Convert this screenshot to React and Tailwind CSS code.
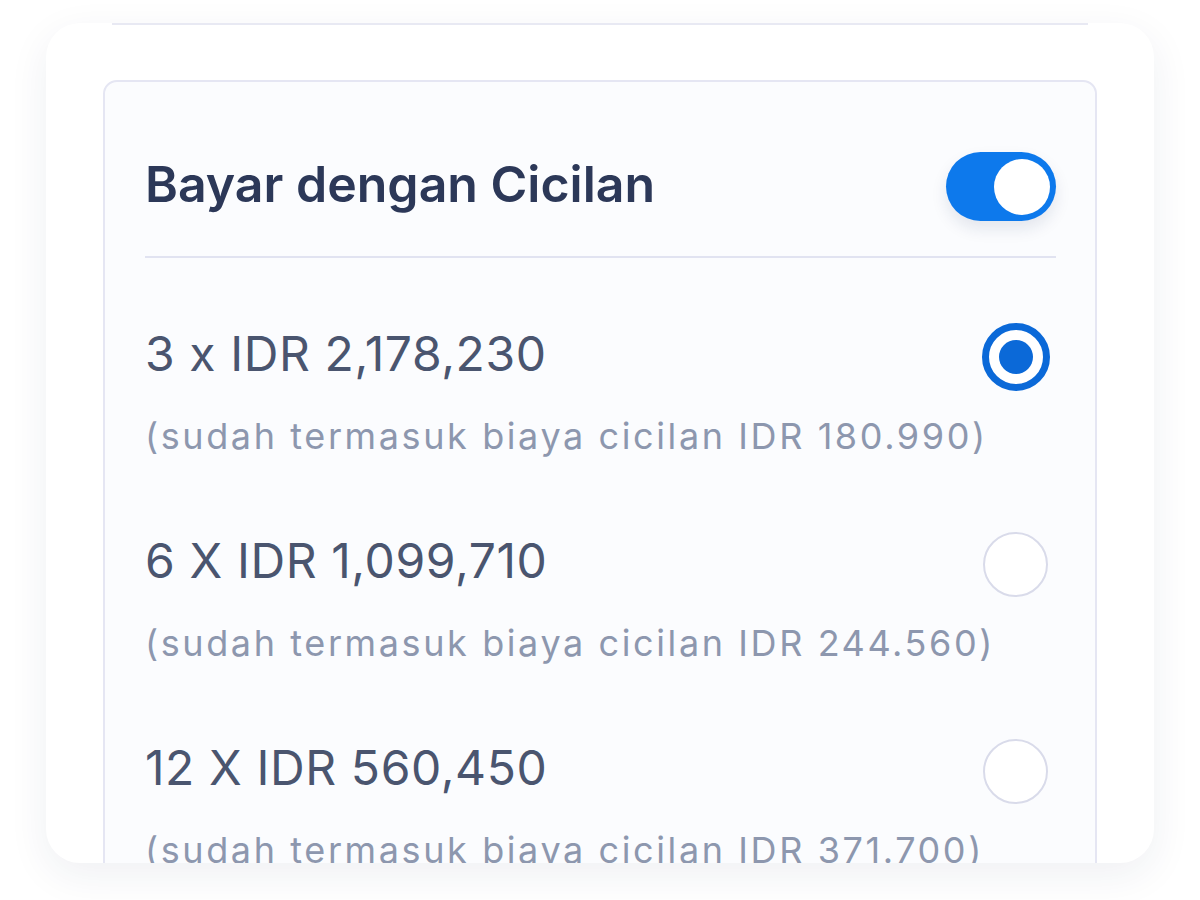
import React from "react";

const options = [
  { main: "3 x IDR 2,178,230", sub: "(sudah termasuk biaya cicilan IDR 180.990)", selected: true },
  { main: "6 X IDR 1,099,710", sub: "(sudah termasuk biaya cicilan IDR 244.560)", selected: false },
  { main: "12 X IDR 560,450", sub: "(sudah termasuk biaya cicilan IDR 371.700)", selected: false },
];

function Radio({ selected }) {
  if (selected) {
    return (
      <div className="w-[68px] h-[68px] rounded-full border-[7px] border-[#0b69d8] bg-white flex items-center justify-center">
        <div className="w-[34px] h-[34px] rounded-full bg-[#0b69d8]" />
      </div>
    );
  }
  return <div className="w-[65px] h-[65px] mr-[2px] rounded-full border-2 border-[#d9dbea] bg-white" />;
}

export default function App() {
  return (
    <div
      className="w-[1200px] h-[900px] bg-white pt-[23px] pl-[46px]"
      style={{ fontFamily: "Inter, 'Noto Sans', sans-serif" }}
    >
      <div className="w-[1108px] h-[840px] rounded-[34px] bg-white overflow-hidden shadow-[0_12px_40px_rgba(30,40,80,0.07)]">
        <div className="mx-[66px] h-[2px] bg-[#e8e9f3]" />
        <div className="mt-[55px] ml-[57px] w-[994px] rounded-[14px] border-2 border-[#e5e6f3] bg-[#fbfcfe] pl-[40px] pr-[39px] pt-[70px] pb-[60px]">
          <div className="flex items-center justify-between h-[69px]">
            <span className="text-[50px] font-semibold text-[#2c3858] leading-none mb-[6px]">
              Bayar dengan Cicilan
            </span>
            <div className="w-[110px] h-[69px] rounded-full bg-[#0d79ec] flex items-center justify-end pr-[6px] shadow-[0_8px_16px_rgba(20,40,90,0.10)]">
              <div className="w-[56px] h-[56px] rounded-full bg-white" />
            </div>
          </div>
          <div className="mt-[35px] h-[2px] bg-[#e1e3f1]" />
          <div className="pt-[64px] flex flex-col">
            {options.map((o, i) => (
              <div key={i} className="flex flex-col h-[207px]">
                <div className="flex items-center justify-between h-[70px] pr-[6px]">
                  <span className="text-[48px] text-[#4a556f] leading-none tracking-[0.6px] mb-[6px]">{o.main}</span>
                  <Radio selected={o.selected} />
                </div>
                <div className="mt-[20px] text-[36px] leading-[48px] tracking-[2.6px] text-[#8d97ae] whitespace-nowrap">
                  {o.sub}
                </div>
              </div>
            ))}
          </div>
        </div>
      </div>
    </div>
  );
}
